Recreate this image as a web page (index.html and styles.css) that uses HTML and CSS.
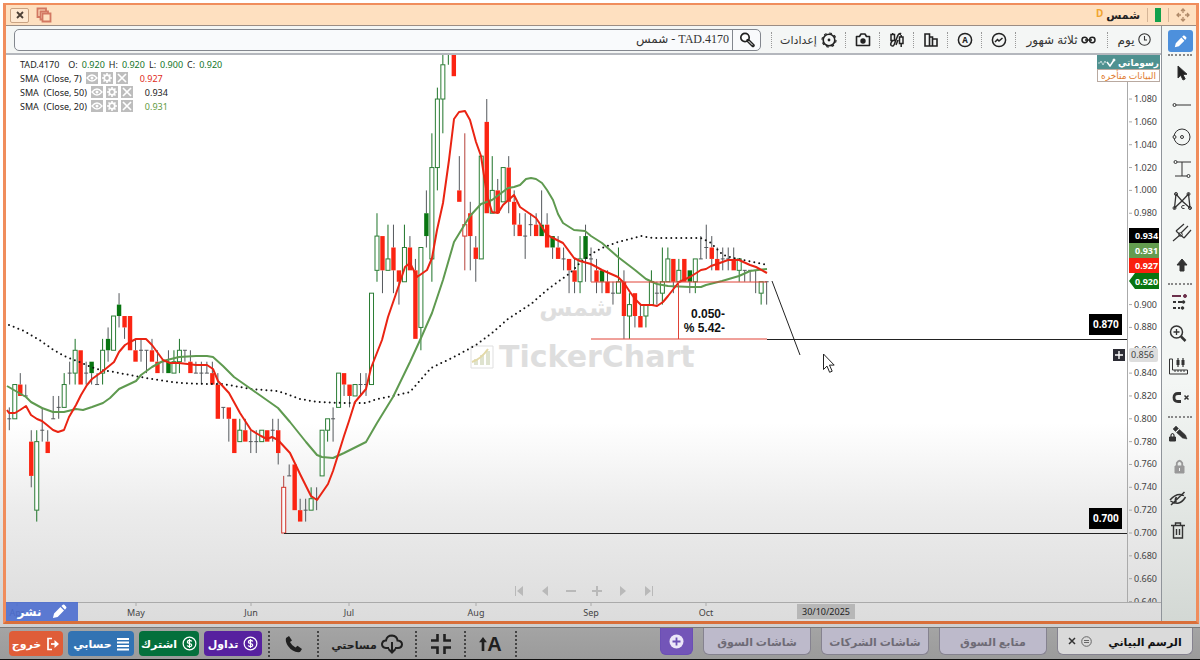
FILE: index.html
```html
<!DOCTYPE html>
<html lang="ar">
<head>
  <meta charset="UTF-8" />
  <meta name="viewport" content="width=device-width, initial-scale=1.0" />
  <title>TickerChart</title>
  <link rel="stylesheet" href="styles.css">
</head>
<body>
  <!-- Shared icons -->
  <svg class="defs" width="0" height="0" aria-hidden="true">
    <symbol id="eye" viewBox="0 0 12 12"><path d="M1 6q5-6 10 0q-5 6-10 0z" fill="none" stroke="#fff" stroke-width="1.3"/><circle cx="6" cy="6" r="1.5" fill="#fff"/></symbol>
    <symbol id="gear" viewBox="0 0 12 12"><circle cx="6" cy="6" r="2.8" fill="none" stroke="#fff" stroke-width="1.8"/><path d="M6 1v2M6 9v2M1 6h2M9 6h2M2.5 2.5l1.3 1.3M8.2 8.2l1.3 1.3M2.5 9.5l1.3-1.3M8.2 3.8l1.3-1.3" stroke="#fff" stroke-width="1.6"/></symbol>
    <symbol id="cross" viewBox="0 0 12 12"><path d="M2 2l8 8M10 2l-8 8" stroke="#fff" stroke-width="1.7"/></symbol>
    <symbol id="dollar" viewBox="0 0 16 16"><circle cx="8" cy="8" r="6.8" fill="none" stroke="currentColor" stroke-width="1.3"/><path d="M10.4 5.8Q9.8 4.7 8 4.7Q5.7 4.8 5.7 6.3Q5.7 7.6 8 8Q10.4 8.4 10.4 9.8Q10.3 11.3 8 11.3Q6 11.3 5.5 10M8 3.3v9.4" fill="none" stroke="currentColor" stroke-width="1.3"/></symbol>
    <symbol id="pencil" viewBox="0 0 16 16"><path d="M1 15l1.2-5L9 3.2l3.8 3.8L6 13.8zM10 2.2l1.6-1.5q.9-.5 1.6.2l1.9 1.9q.7.8 0 1.6L13.8 6z" fill="currentColor"/></symbol>
  </svg>

  <main class="window">
    <header class="titlebar">
      <button class="close-btn" aria-label="Close"><svg width="8" height="8" viewBox="0 0 8 8"><path d="M1 1l6 6M7 1L1 7" stroke="#4d4036" stroke-width="1.8"/></svg></button>
      <button class="plain" aria-label="Restore"><svg width="16" height="16" viewBox="0 0 16 16" fill="none" stroke="#d27862" stroke-width="1.8"><path d="M4 10H1.5V1.5H10V4"/><path d="M7 12.5H4.5V4.5H12V7"/><path d="M6.5 6.5h8v8h-8z"/></svg></button>
      <span class="spacer"></span>
      <span class="delay">D</span>
      <span class="symbol">شمس</span>
      <span class="status"><i></i></span>
      <svg class="move" width="14" height="14" viewBox="0 0 14 14" fill="none" stroke="#b08a69" stroke-width="1.3"><path d="M7 5V1M5 3l2-2 2 2M7 9v4M5 11l2 2 2-2M5 7H1M3 5L1 7l2 2M9 7h4M11 5l2 2-2 2"/></svg>
    </header>

    <div class="workspace">
      <section class="main">
        <div class="toolbar">
          <form class="search">
            <input type="text" dir="rtl" aria-label="بحث" value="TAD.4170 - شمس">
            <button type="button" aria-label="Search"><svg width="16" height="16" viewBox="0 0 16 16"><circle cx="6" cy="5.5" r="4.2" fill="#fff" stroke="#222" stroke-width="1.7"/><path d="M9 8.5l5 5" stroke="#222" stroke-width="3.5" stroke-linecap="round"/><path d="M9.5 9l4.2 4.2" stroke="#fff" stroke-width="1" /></svg></button>
          </form>
          <button class="tool settings">إعدادات
            <svg width="16" height="16" viewBox="0 0 16 16"><circle cx="8" cy="8" r="5.8" fill="none" stroke="#222" stroke-width="1.6"/><circle cx="8" cy="8" r="7" fill="none" stroke="#222" stroke-width="1.2" stroke-dasharray="2.7 2.8"/><circle cx="8" cy="8" r="1.4" fill="#222"/></svg>
          </button>
          <button class="tool icon" aria-label="Snapshot"><svg width="16" height="16" viewBox="0 0 16 16"><path d="M1.5 4.5h3l1.5-2.5h4l1.5 2.5h3v9h-13z" fill="none" stroke="#222" stroke-width="1.6" stroke-linejoin="round"/><circle cx="8" cy="9" r="2.7" fill="#222"/></svg></button>
          <button class="tool icon" aria-label="Candles"><svg width="16" height="16" viewBox="0 0 16 16" fill="none" stroke="#222" stroke-width="1.5"><path d="M2 2.5h3.5v6H2zM3.7 1v1.5M3.7 8.500q-3 3-1.500 5q2 1.500 3-1l3.600-9q1-2.500 2.700-2L11 3M10.500 5h3.500v6.500h-3.500zM12.200 3v2M12.200 11.500V15M7 13l2-5"/></svg></button>
          <button class="tool icon" aria-label="Compare"><svg width="16" height="16" viewBox="0 0 16 16" fill="none" stroke="#222" stroke-width="1.6"><path d="M2 2h4.500v12H2zM6.500 5h3v9M9.500 7H14v7H6.500"/></svg></button>
          <button class="tool icon" aria-label="Alerts"><svg width="16" height="16" viewBox="0 0 16 16"><circle cx="8" cy="8" r="6.6" fill="none" stroke="#222" stroke-width="1.5"/><text x="8" y="11" text-anchor="middle" class="icon-a">A</text></svg></button>
          <button class="tool icon" aria-label="Indicators"><svg width="16" height="16" viewBox="0 0 16 16" fill="none" stroke="#222" stroke-width="1.5"><circle cx="8" cy="8" r="6.6"/><path d="M4 10l2.500-2.500 1.500 1.500 3.500-3"/></svg></button>
          <button class="tool range">ثلاثة شهور
            <svg width="15" height="8" viewBox="0 0 15 8" fill="none" stroke="#222" stroke-width="1.5"><circle cx="3.7" cy="4" r="2.7"/><circle cx="11.3" cy="4" r="2.7"/><path d="M4 4h7"/></svg>
          </button>
          <button class="tool day">يوم
            <svg width="13" height="13" viewBox="0 0 13 13" fill="none" stroke="#333" stroke-width="1.1"><circle cx="6.5" cy="6.5" r="5.7"/><path d="M6.5 3v4H9"/></svg>
          </button>
        </div>

        <div class="chart">
          <svg id="chart" viewBox="6 55 1155 566" role="img" aria-label="TAD.4170">
            <defs><clipPath id="plot"><rect x="6" y="55" width="1155" height="547"/></clipPath></defs>
            <g class="watermark">
              <text x="576" y="316" class="wm-name">شمس</text>
              <path d="M471 346h22v22h-22z" fill="none" stroke="#dfdfdf"/>
              <path d="M474 365v-6h4v6zM480 365v-10h4v10zM486 365v-14h4v14z" fill="#dfe3cf"/><path d="M472 362q9-3 16-13" stroke="#e3d9a8" stroke-width="2" fill="none"/>
              <text x="499" y="367" class="wm-brand">TickerChart</text>
            </g>
            <g id="candles" clip-path="url(#plot)"></g>
            <polyline class="sma50" points="9,325 24,331 41,341 52,349 64,356 77,361 96,369 114,372 135,376 158,380 180,383 207,384 223,384 251,389 278,391 300,399 317,402 344,403 366,403 377,399 393,396 410,392 431,368 452,358 476,345 492,333 508,319 531,304 547,290 570,273 580,263 591,254 602,248 618,242 641,236 652,238 690,238 701,238 711,243 723,255 734,258 753,262 767,265"/>
            <polyline class="sma20" points="7,386 26,397 31,402 42,408 53,412 64,412 76,409 83,410 92,407 103,403 110,398 119,389 136,381 141,375 152,367 163,361 179,357 196,356 207,356 213,357 223,366 234,377 251,389 261,396 278,408 290,422 306,442 317,455 322,457 333,458 344,453 366,442 377,423 393,397 410,362 421,338 432,313 443,280 454,242 465,224 470,216 481,204 492,200 508,188 514,187 520,185 526,179 531,178 536,179 542,183 547,190 553,200 558,214 563,223 574,230 585,231 591,236 602,243 618,257 635,270 646,279 657,284 668,286 690,287 701,287 706,285 722,281 739,276 750,271 767,269"/>
            <polyline class="sma7" points="7,410 9,413 15,413 20,410 26,406 31,415 37,419 42,421 47,425 53,430 58,432 64,430 69,417 76,405 81,395 87,385 92,379 103,371 114,362 119,352 125,345 130,342 136,339 146,339 152,345 163,360 170,363 179,363 196,365 207,365 213,369 218,381 229,393 240,413 251,430 261,436 267,439 272,437 278,440 290,453 300,474 311,496 317,500 328,484 333,471 339,452 344,436 349,421 355,402 366,389 371,368 382,340 388,317 399,285 405,267 410,263 417,277 427,270 432,258 437,230 443,203 449,160 454,119 459,112 465,111 470,120 476,142 481,156 487,195 492,212 498,213 503,205 514,195 520,207 536,218 542,227 547,235 563,243 574,258 580,261 591,264 602,270 618,277 624,283 630,292 635,299 641,305 652,305 657,306 663,302 668,296 679,282 690,277 701,270 706,269 711,266 717,264 728,260 739,260 750,265 756,267 767,273"/>
            <!-- User drawings -->
            <path class="measure" d="M591 282h176M591 339h176M678.5 282v57"/>
            <path class="level" d="M767 339.5h361M284 533.5h844M772 281L800 355"/>
            <text x="725" y="318" class="measure-text">0.050-</text>
            <text x="725" y="332" class="measure-text">% 5.42-</text>
            <!-- Axes -->
            <path class="axis" d="M1127.5 55v547M6 602.5h1155"/>
            <g id="prices" clip-path="url(#plot)"></g>
            <g id="months"></g>
            <g class="tags">
              <path d="M1129 228h30v15h-30z" fill="#000"/><text x="1135" y="239">0.934</text>
              <path d="M1129 243h30v15h-30z" fill="#639c4f"/><text x="1135" y="254">0.931</text>
              <path d="M1129 258h30v15h-30z" fill="#f9200e"/><text x="1135" y="269">0.927</text>
              <path d="M1129 281l6-8h24v16h-24z" fill="#087511"/><text x="1135" y="285">0.920</text>
              <path d="M1089 314h33v21h-33zM1089 508h33v21h-33z" fill="#000"/>
              <text x="1093" y="328" class="level-tag">0.870</text><text x="1093" y="522" class="level-tag">0.700</text>
            </g>
            <path d="M1113 349h12v12h-12z" fill="#2c2c34"/><path d="M1115 355h8M1119 351v8" stroke="#fff" stroke-width="1.4"/>
            <rect x="1129" y="348" width="29" height="14" rx="2" fill="#dedede"/><text x="1131" y="358" class="axis-text">0.856</text>
            <rect x="797" y="604" width="58" height="15" fill="#b7b7b7"/><text x="826" y="615" class="date-text" text-anchor="middle">30/10/2025</text>
            <path d="M823.5 354v15.500l3.500-3.400 2.600 6.200 2.600-1.100-2.700-6.100h4.700z" fill="#fff" stroke="#222"/>
          </svg>

          <div class="legend" dir="ltr">
            <div class="row"><span>TAD.4170</span><span class="ohlc"><span>O:</span><b>0.920</b><span>H:</span><b>0.920</b><span>L:</span><b>0.900</b><span>C:</span><b>0.920</b></span></div>
            <div class="row"><span>SMA&nbsp; (Close, 7)</span><span class="acts"><button aria-label="Show"><svg><use href="#eye"/></svg></button><button aria-label="Edit"><svg><use href="#gear"/></svg></button><button aria-label="Remove"><svg><use href="#cross"/></svg></button></span><span class="red">0.927</span></div>
            <div class="row"><span>SMA&nbsp; (Close, 50)</span><span class="acts"><button aria-label="Show"><svg><use href="#eye"/></svg></button><button aria-label="Edit"><svg><use href="#gear"/></svg></button><button aria-label="Remove"><svg><use href="#cross"/></svg></button></span><span>0.934</span></div>
            <div class="row"><span>SMA&nbsp; (Close, 20)</span><span class="acts"><button aria-label="Show"><svg><use href="#eye"/></svg></button><button aria-label="Edit"><svg><use href="#gear"/></svg></button><button aria-label="Remove"><svg><use href="#cross"/></svg></button></span><span class="green">0.931</span></div>
          </div>

          <div class="badges">
            <button class="my-drawings"><svg width="18" height="9" viewBox="0 0 18 9" fill="none" stroke="#fff"><path d="M0 5h2l1-2 2 4 2-4 1 2" opacity=".6"/><path d="M9 4l3 4 4-6" stroke-width="1.5"/><circle cx="16" cy="2" r="1" fill="#fff"/></svg>رسوماتي</button>
            <span class="delayed">البيانات متأخره</span>
          </div>

          <div class="pager">
            <button aria-label="First"><svg viewBox="0 0 10 10"><path d="M1 0h1v10H1zM9 0v10L3 5z"/></svg></button>
            <button aria-label="Previous"><svg viewBox="0 0 10 10"><path d="M8 0v10L2 5z"/></svg></button>
            <button aria-label="Zoom out"><svg viewBox="0 0 10 10"><path d="M0 4h10v2H0z"/></svg></button>
            <button aria-label="Zoom in"><svg viewBox="0 0 10 10"><path d="M0 4h4V0h2v4h4v2H6v4H4V6H0z"/></svg></button>
            <button aria-label="Next"><svg viewBox="0 0 10 10"><path d="M2 0v10l6-5z"/></svg></button>
            <button aria-label="Last"><svg viewBox="0 0 10 10"><path d="M8 0h1v10H8zM1 0v10l6-5z"/></svg></button>
          </div>

          <button class="publish">نشر <svg width="15" height="15"><use href="#pencil"/></svg></button>
        </div>
      </section>

      <!-- Drawing tools -->
      <nav class="tools">
        <button class="draw" aria-label="Draw"><svg><use href="#pencil"/></svg></button>
        <hr>
        <button aria-label="Cursor"><svg viewBox="0 0 20 20"><path d="M6 3v12l2.800-2.600 2.200 4.600 2.200-1-2.200-4.500 4-.3z" fill="#222"/></svg></button>
        <button aria-label="Line"><svg viewBox="0 0 20 20"><circle cx="2.500" cy="10" r="1.5"/><path d="M4 10h15"/></svg></button>
        <button aria-label="Circle"><svg viewBox="0 0 20 20"><circle cx="10" cy="10" r="8"/><circle cx="10" cy="10" r="1.5"/><circle cx="2.500" cy="10" r="1.5" fill="#eef1ef"/></svg></button>
        <button aria-label="Range"><svg viewBox="0 0 20 20"><path d="M5 3h14M3 17h12M10 3v14"/><circle cx="3.500" cy="3" r="1.5"/><circle cx="16.500" cy="17" r="1.5"/></svg></button>
        <button aria-label="Pattern"><svg viewBox="0 0 20 20"><path d="M2.500 17L4 3l6 7 6.500-7L18 17l-8-7z" stroke-width="1.3"/><circle cx="4" cy="3" r="1.5"/><circle cx="16.500" cy="3" r="1.5"/><circle cx="2.500" cy="17" r="1.5"/><circle cx="18" cy="17" r="1.5"/><path d="M12.500 14.500q-3-.5-3 1.500t3 1.500"/></svg></button>
        <button aria-label="Fork"><svg viewBox="0 0 20 20"><path d="M1 18l7-6M4 8l8 7M4 8l8-7M9 10l7-7M12 15l7-8" stroke-width="1.2"/><circle cx="8.500" cy="11.500" r="1.8"/></svg></button>
        <button aria-label="Arrow"><svg viewBox="0 0 20 20"><path d="M10 4l5 6h-3v6H8v-6H5z" fill="#333" stroke="#333"/></svg></button>
        <hr>
        <button aria-label="Levels"><svg viewBox="0 0 20 20"><path d="M1 10h3M6 10h4M1 16h3M6 16h2" stroke-width="2"/><path d="M0 4h9" stroke="#6b304b" stroke-width="2"/><circle cx="13" cy="4" r="1.5" fill="#6b304b" stroke="#6b304b"/><circle cx="11.500" cy="10" r="1.3" fill="#333"/><circle cx="10.500" cy="16" r="1.3" fill="#333"/></svg></button>
        <button aria-label="Zoom"><svg viewBox="0 0 20 20"><circle cx="4.500" cy="8" r="6" stroke-width="1.5"/><path d="M1.500 8h6M4.500 5v6" stroke-width="1.3"/><path d="M9 12.500l4.500 4.500" stroke-width="2.500"/></svg></button>
        <button aria-label="Ruler"><svg viewBox="0 0 20 20"><path d="M-2.500 3h3v11h15v4h-18zM3 14v2M6 14v2M9 14v2M12 14v2"/><path d="M6 2v9M11 2v9" stroke-width="1.2"/><path d="M6 4v5M11 4v5" stroke-width="3"/></svg></button>
        <button aria-label="Magnet"><svg viewBox="0 0 20 20"><path d="M9 5.500H6q-4 0-4 4t4 4h3" stroke-width="2.800"/><path d="M12.500 7.500l4 4M16.500 7.500l-4 4" stroke-width="1.5"/></svg></button>
        <hr>
        <button aria-label="Lock drawing"><svg viewBox="0 0 20 20"><path d="M1 4l3-3 2.500 2.500-3 3zM4.500 7.500l3-3 6 5.500 1.500 4-4.500-1z" fill="#333" stroke-width=".5"/><path d="M-2.500 12h6v4h-6z" fill="#333"/><path d="M-1 12v-2q1.500-3 3 0v2" stroke-width="1.200"/></svg></button>
        <button aria-label="Lock" class="off"><svg viewBox="0 0 20 20"><path d="M3 9h9v7H3z" fill="#999"/><path d="M4.800 9V6q2.700-4.500 5.400 0v3" stroke-width="1.800"/><path d="M7.500 11v3" stroke="#eee"/></svg></button>
        <button aria-label="Hide"><svg viewBox="0 0 20 20"><path d="M-2 11q7-8 14-4.500M13.500 8q-6 10-15 4M-1 16L12.500 3M4.500 8q-2.500 3.500 0 5" stroke-width="1.5"/></svg></button>
        <button aria-label="Delete"><svg viewBox="0 0 20 20"><path d="M-1 4.500h14M1.500 5v12h9V5M3.500 4V2h5v2M4.500 8v6M7.500 8v6" stroke-width="1.4"/></svg></button>
      </nav>
    </div>
  </main>

  <footer class="bottombar">
    <button class="btn exit">خروج <svg width="14" height="14" viewBox="0 0 14 14" fill="none" stroke="#fff" stroke-width="1.7"><path d="M6 1.500H2v11h4"/><path d="M5 7h5"/><path d="M8.500 3l4.500 4-4.500 4z" fill="#fff" stroke="none"/></svg></button>
    <button class="btn account">حسابي <svg width="12" height="14" viewBox="0 0 12 14" stroke="#fff" stroke-width="1.8"><path d="M0 2h12M0 5.500h12M0 9h12M0 12.500h12"/></svg></button>
    <button class="btn subscribe">اشترك <svg width="15" height="15"><use href="#dollar"/></svg></button>
    <button class="btn trade">تداول <svg width="15" height="15"><use href="#dollar"/></svg></button>
    <button class="cell phone" aria-label="Phone"><svg width="18" height="18" viewBox="0 0 18 18"><path d="M1 3l3-2 3 4.500L5 7q2 4 5.500 5.500l2-1.800L17 14l-2 3Q8 18 3 11Q0 6.500 1 3z" fill="#202020"/></svg></button>
    <button class="cell space">مساحتي <svg width="22" height="20" viewBox="0 0 22 20" fill="none" stroke="#202020" stroke-width="2"><path d="M8 14H5q-4-.5-4-4q.5-3.500 4-3.500Q6 1.500 11 1.500q5 .5 5.500 5Q21 7 21 10.500q-.5 3.500-4 3.500h-3"/><path d="M11 8v10M7.500 15l3.500 3.500 3.500-3.500"/></svg></button>
    <button class="cell" aria-label="Compress"><svg width="20" height="20" viewBox="0 0 20 20" fill="none" stroke="#202020" stroke-width="2.6"><path d="M0 6.500h6.500V0M20 6.500h-6.500V0M0 13.500h6.500V20M20 13.500h-6.500V20"/></svg></button>
    <button class="cell font-size" aria-label="Font size"><svg width="8" height="14" viewBox="0 0 9 16"><path d="M4.500 0L9 6H6v10H3V6H0z" fill="#202020"/></svg><span>A</span></button>
    <span class="spacer"></span>
    <button class="tab add" aria-label="Add"><svg width="15" height="15" viewBox="0 0 15 15"><circle cx="7.500" cy="7.500" r="7" fill="#ece6f8"/><path d="M3.500 7.500h8M7.500 3.500v8" stroke="#6b4fb5" stroke-width="1.8"/></svg></button>
    <button class="tab">شاشات السوق</button>
    <button class="tab">شاشات الشركات</button>
    <button class="tab">متابع السوق</button>
    <button class="tab active"><span class="tab-icons"><svg width="8" height="8" viewBox="0 0 8 8"><path d="M1 1l6 6M7 1L1 7" stroke="#333" stroke-width="1.5"/></svg><svg width="11" height="11" viewBox="0 0 11 11" fill="none" stroke="#666"><circle cx="5.500" cy="5.500" r="4.800"/><path d="M3 4.500h5M3 6.500h5"/></svg></span>الرسم البياني</button>
  </footer>

  <script src="chart.js"></script>
</body>
</html>
```
FILE: styles.css
```css
/* Global Styles */
* {
  box-sizing: border-box;
}
body {
  margin: 0;
  height: 100vh;
  display: flex;
  flex-direction: column;
  padding-top: 3px;
  font-family: "Noto Sans", "DejaVu Sans", sans-serif;
  font-size: 12px;
  color: #333;
  background: linear-gradient(#fff 60%, #cfcfcf 95%);
  overflow: hidden;
}
button {
  font: inherit;
  color: inherit;
  border: none;
  background: none;
  padding: 0;
  cursor: pointer;
  display: flex;
  align-items: center;
  justify-content: center;
  white-space: nowrap;
}
svg {
  display: block;
  flex: none;
}
.defs {
  position: absolute;
}
.spacer {
  flex: 1;
}
/* Window */
.window {
  flex: 1;
  min-height: 0;
  margin: 0 1px 0 3px;
  display: flex;
  flex-direction: column;
  border: 3px solid #f08d5c;
  border-top-width: 2px;
  border-bottom-color: #d96f3a;
}
.titlebar {
  height: 21px;
  display: flex;
  align-items: center;
  padding: 0 6px 0 4px;
  gap: 7px;
  background: #fee0c0;
  border-bottom: 1px solid #9c8d84;
}
.close-btn {
  width: 19px;
  height: 15px;
  border: 1px solid #c9a383;
  border-radius: 2px;
  background: #ffe9d2;
}
.delay {
  color: #f0a530;
  font-size: 10px;
  font-weight: bold;
  line-height: 10px;
  margin-bottom: 4px;
}
.titlebar .symbol {
  font-size: 11px;
  font-weight: bold;
  color: #222;
  line-height: 20px;
  margin-left: -4px;
}
.status {
  width: 22px;
  height: 14px;
  display: flex;
  justify-content: center;
  border: solid #d5b597;
  border-width: 0 1px;
}
.status i {
  width: 6px;
  height: 14px;
  background: #12a04b;
}
/* Workspace */
.workspace {
  flex: 1;
  min-height: 0;
  display: flex;
}
.main {
  flex: 1;
  min-width: 0;
  display: flex;
  flex-direction: column;
  border-right: 1px solid #8f949a;
}
.toolbar {
  height: 29px;
  display: flex;
  align-items: center;
  padding-left: 8px;
  background: #f4f6f5;
  border-bottom: 2px solid #b4b7bd;
}
.search {
  flex: 1;
  height: 22px;
  margin-right: 10px;
  display: flex;
  border: 1px solid #83878e;
  border-radius: 5px;
  background: #f9fafc;
  overflow: hidden;
}
.search input {
  flex: 1;
  min-width: 0;
  border: none;
  background: none;
  padding: 0 3px;
  font-family: "Liberation Serif", "DejaVu Sans", serif;
  font-size: 12px;
  color: #333;
}
.search button {
  width: 28px;
  border-left: 1px solid #83878e;
}
.tool {
  height: 16px;
  gap: 4px;
  border-left: 1px dotted #999;
}
.tool.icon {
  width: 34px;
}
.tool.settings {
  width: 74px;
  font-size: 11px;
}
.tool.range {
  width: 92px;
}
.tool.day {
  width: 54px;
}
.icon-a {
  font-size: 8px;
  font-weight: bold;
  fill: #222;
}
/* Chart */
.chart {
  position: relative;
  flex: 1;
  min-height: 0;
  background: linear-gradient(#fff 65%, #ececec 80%, #dcdcdc);
}
#chart {
  width: 100%;
  height: 100%;
}
.wick {
  stroke: #54585c;
}
.wick.up {
  stroke: #1d7328;
}
.wick.hollow-down {
  stroke: #b5403a;
}
.body.g {
  fill: #fff;
  fill-opacity: .85;
  stroke: #2b7d35;
}
.body.G {
  fill: #087511;
}
.body.r {
  fill: #fb2412;
}
.body.R {
  fill: #fff;
  fill-opacity: .7;
  stroke: #d2342a;
}
.sma7, .sma20, .sma50 {
  fill: none;
  stroke-width: 2;
  stroke-linejoin: round;
}
.sma7 {
  stroke: #ea2413;
}
.sma20 {
  stroke: #5f9a50;
}
.sma50 {
  stroke: #111;
  stroke-linecap: round;
  stroke-dasharray: 0 5;
}
.measure {
  stroke: #e04236;
  fill: none;
}
.level {
  stroke: #222;
  fill: none;
}
.measure-text {
  font: bold 12px "Liberation Sans", sans-serif;
  text-anchor: end;
  fill: #111;
}
.axis {
  stroke: #aaa;
  fill: none;
}
.axis-text {
  font-size: 9px;
  fill: #444;
}
.date-text {
  font-size: 9px;
  fill: #222;
}
.tags text {
  font-size: 9px;
  font-weight: bold;
  fill: #fff;
}
.tags .level-tag {
  font-size: 10px;
}
.watermark text {
  fill: #dedede;
  font-weight: bold;
}
.wm-name {
  font-size: 24px;
  text-anchor: middle;
}
.wm-brand {
  font-family: "DejaVu Sans", sans-serif;
  font-size: 30px;
}
/* Legend over the chart */
.legend {
  position: absolute;
  top: 2px;
  left: 14px;
  font-size: 9px;
  color: #222;
}
.legend .row {
  display: flex;
  align-items: center;
  height: 14px;
  gap: 4px;
  white-space: pre;
}
.legend b {
  font-weight: normal;
  color: #14752a;
}
.ohlc {
  display: flex;
  gap: 4px;
  margin-left: 5px;
}
.acts {
  display: flex;
  gap: 3px;
  margin-right: 8px;
}
.acts button {
  width: 12px;
  height: 12px;
  background: #bdbdbd;
}
.acts svg {
  width: 12px;
  height: 12px;
}
.legend .red {
  color: #e02b20;
}
.legend .green {
  color: #5f9a3f;
}
.badges {
  position: absolute;
  top: 0;
  right: 1px;
  width: 63px;
  font-size: 9px;
}
.my-drawings {
  width: 100%;
  height: 14px;
  gap: 2px;
  background: #4f9190;
  color: #fff;
  font-weight: bold;
}
.delayed {
  display: block;
  height: 13px;
  line-height: 11px;
  text-align: center;
  white-space: nowrap;
  color: #e07a2c;
  background: #fff;
  border: 1px solid #b9a9a0;
}
.pager {
  position: absolute;
  bottom: 25px;
  left: 0;
  right: 0;
  display: flex;
  justify-content: center;
}
.pager button {
  width: 26px;
}
.pager svg {
  width: 10px;
  height: 10px;
  fill: #b9b9b9;
}
.publish {
  position: absolute;
  left: 0;
  bottom: 0;
  width: 72px;
  height: 19px;
  gap: 10px;
  font-weight: bold;
  color: #fff;
  background: rgba(77, 110, 207, 0.9);
}
/* Drawing tools */
.tools {
  width: 34px;
  display: flex;
  flex-direction: column;
  align-items: center;
  padding: 4px 0 0 6px;
  background: linear-gradient(#f3f6f4 60%, #d3d8d4);
}
.tools button {
  width: 28px;
  height: 32px;
}
.tools svg {
  width: 20px;
  height: 20px;
  fill: none;
  stroke: #333;
  overflow: visible;
}
.tools .off svg {
  stroke: #999;
}
.tools .draw {
  width: 25px;
  height: 22px;
  align-self: flex-start;
  border-radius: 3px;
  background: #4d90dc;
  color: #fff;
}
.tools .draw svg {
  width: 13px;
  height: 13px;
  stroke: none;
}
.tools hr {
  width: 24px;
  height: 0;
  margin: 2px 4px 1px 0;
  border: none;
  border-top: 2px dotted #888;
}
/* Bottom bar */
.bottombar {
  height: 33px;
  margin-top: 3px;
  display: flex;
  align-items: flex-start;
  padding: 0 7px 0 9px;
  background: linear-gradient(#a4a4a4, #9b9b9b);
  border-top: 1px solid #777;
  border-bottom: 1px solid #111;
  font-size: 11px;
}
.btn {
  height: 25px;
  margin: 3px 5px 0 0;
  gap: 5px;
  border-radius: 4px;
  font-weight: bold;
  color: #fff;
}
.exit {
  width: 54px;
  background: #df5d38;
}
.account {
  width: 66px;
  background: #3273b3;
}
.subscribe {
  width: 60px;
  background: #04703c;
}
.trade {
  width: 58px;
  background: #57219f;
}
.cell {
  width: 49px;
  height: 26px;
  margin-top: 3px;
  border-right: 2px dotted #444;
}
.cell.phone {
  width: 51px;
  margin-left: 1px;
  border-left: 2px dotted #444;
}
.cell.space {
  width: 98px;
  gap: 4px;
  font-weight: bold;
  color: #222;
}
.cell.font-size {
  width: 51px;
  font-family: "Liberation Sans", sans-serif;
  font-size: 20px;
  font-weight: bold;
  color: #202020;
}
.tab {
  width: 108px;
  height: 27px;
  margin-left: 10px;
  border: 1px solid #85828f;
  border-top: none;
  border-radius: 0 0 6px 6px;
  background: #bdbacb;
  font-weight: bold;
  color: #6e6b76;
}
.tab.add {
  width: 33px;
  margin-left: 0;
  border-color: #6b4fb5;
  background: #7355b8;
}
.tab.active {
  width: 136px;
  gap: 16px;
  background: #dadada;
  color: #111;
}
.tab-icons {
  display: flex;
  align-items: center;
  gap: 5px;
}
```
FILE: chart.js
```js
// type, high, bodyTop, bodyBottom, low (in halalas)
// g: hollow green, G: filled green, r: filled red, R: hollow red, d: doji
const candles = `
d 81 80 80 79|g 83 83 80 80|r 84 83 82 82|d 83 82 82 82|r 79 78 75 74|g 79 78 72 71|d 81 79 79 78|r 79 78 77 77
d 82 80 80 80|d 82 81 81 80|g 84 83 81 81|d 85 84 84 83|g 87 86 84 83|r 86 86 83 83|d 85 84 84 83|G 85 85 84 83
d 84 83 83 83|g 87 86 84 83|G 88 87 86 85|g 89 89 86 86|G 91 90 89 88|r 89 89 88 87|r 89 89 86 86|r 87 86 85 85
d 87 86 86 85|d 86 86 86 84|r 87 86 85 85|r 86 85 84 84|d 85 85 85 84|G 86 85 84 84|g 86 85 84 84|g 87 86 85 84
d 86 86 86 85|r 86 85 84 84|d 85 84 84 84|d 85 84 84 83|d 85 84 84 84|r 85 84 83 83|r 84 83 80 80|d 81 81 81 80
r 81 81 80 78|r 80 80 77 77|g 80 79 78 78|r 80 79 78 78|d 79 78 78 77|d 79 78 78 77|g 79 79 78 78|r 79 79 78 78
d 80 79 79 78|r 80 79 77 76|R 75 74 70 70|d 76 75 75 75|r 76 76 72 72|r 73 72 71 71|d 73 72 72 71|g 74 73 72 72
d 74 73 73 72|g 79 79 75 75|g 80 80 79 78|d 81 80 80 78|g 84 84 81 81|r 84 84 83 82|r 83 83 82 81|g 83 83 82 82
d 84 83 83 82|d 84 83 83 82|g 91 91 83 83|g 98 96 93 92|r 96 96 93 91|g 97 94 93 93|r 97 95 93 91|r 93 93 92 90
g 97 95 92 92|r 96 95 93 93|r 94 93 87 87|g 95 95 88 86|G 100 98 96 95|g 105 102 94 92|g 109 108 102 100|g 113 111 108 105
g 116 115 113 111|r 114 114 110 110|r 103 100 99 99|R 105 97 96 93|r 99 98 96 93|r 96 95 94 92|g 103 103 94 94|r 108 106 98 98
g 103 100 98 98|r 101 100 98 98|g 102 102 99 99|r 103 102 99 98|r 100 99 97 96|r 98 97 96 96|d 98 96 96 94|d 98 97 97 96
r 98 97 96 96|G 100 97 96 96|r 98 97 95 95|G 96 96 95 94|r 96 95 94 94|d 95 94 94 93|r 94 94 93 91|r 94 93 92 91
g 96 94 92 91|G 97 96 94 92|d 95 94 94 92|r 94 93 92 91|G 93 93 92 91|r 93 92 91 91|d 92 91 91 90|g 95 92 91 91
r 93 92 89 87|g 91 90 89 87|r 91 91 89 88|r 90 89 88 88|g 90 90 89 88|g 93 92 90 90|d 92 91 91 90|g 95 92 91 90
g 95 94 92 92|r 94 94 92 91|g 94 93 92 92|r 94 94 92 92|G 93 93 92 91|g 94 94 92 91|d 96 94 94 94|d 97 95 95 94
r 96 95 94 93|r 95 94 93 93|d 95 94 94 93|d 95 94 94 93|r 95 94 93 93|g 94 94 93 92|d 93 93 93 92|d 93 93 93 92
d 93 93 93 91|g 92 92 91 90|d 92 92 92 90`.trim().split(/[|\n]/);

const months = [["Apr", 17], ["May", 136], ["Jun", 251], ["Jul", 349], ["Aug", 476], ["Sep", 591], ["Oct", 706]];

const ns = "http://www.w3.org/2000/svg";
const priceY = p => 533 - (p - 70) * 11.42;

function add(parent, name, attrs, text) {
  const el = document.createElementNS(ns, name);
  for (const key in attrs) el.setAttribute(key, attrs[key]);
  if (text) el.textContent = text;
  parent.appendChild(el);
}

function drawCandles() {
  const group = document.getElementById("candles");
  candles.forEach((row, i) => {
    const [type, ...values] = row.split(" ");
    const [high, top, bottom, low] = values.map(v => priceY(Number(v)));
    const x = 9.3 + i * 5.488;
    if (type === "d") {
      add(group, "path", { class: "wick", d: `M${x} ${high}V${low}M${x - 2} ${top}h4` });
      return;
    }
    const wick = { g: "wick up", R: "wick hollow-down" }[type] || "wick";
    add(group, "path", { class: wick, d: `M${x} ${high}V${top}M${x} ${bottom}V${low}` });
    const w = type === "g" || type === "R" ? 4 : 4.4;
    add(group, "rect", { class: "body " + type, x: x - w / 2, y: top, width: w, height: bottom - top });
  });
}

function drawAxes() {
  const prices = document.getElementById("prices");
  for (let p = 64; p <= 108; p += 2) {
    const y = priceY(p);
    // these sit behind the average tags
    if (p >= 92 && p <= 96) continue;
    add(prices, "path", { class: "axis", d: `M1129 ${y}h3` });
    add(prices, "text", { class: "axis-text", x: 1134, y: y + 3 }, (p / 100).toFixed(3));
  }
  const group = document.getElementById("months");
  months.forEach(([name, x]) => {
    add(group, "path", { class: "axis", d: `M${x} 602v4` });
    add(group, "text", { class: "axis-text", x: x, y: 616, "text-anchor": "middle" }, name);
  });
}

drawCandles();
drawAxes();
```
